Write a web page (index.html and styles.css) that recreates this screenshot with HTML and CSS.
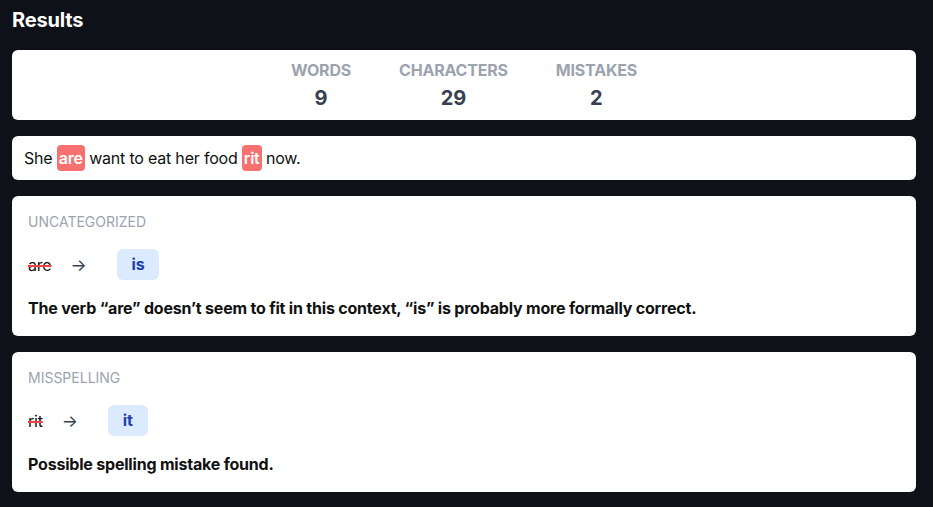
FILE: index.html
```html
<!DOCTYPE html>
<html>
<head>
<meta charset="utf-8">
<link rel="stylesheet" href="styles.css">
</head>
<body>
<div class="page">
  <h1 class="title">Results</h1>
  <div class="card stats">
    <div class="stat"><div class="stat-label">Words</div><div class="stat-value">9</div></div>
    <div class="stat"><div class="stat-label">Characters</div><div class="stat-value">29</div></div>
    <div class="stat"><div class="stat-label">Mistakes</div><div class="stat-value">2</div></div>
  </div>
  <div class="card sentence">She <span class="mark">are</span> want to eat her food <span class="mark">rit</span> now.</div>
  <div class="card issue">
    <div class="category">Uncategorized</div>
    <div class="fix"><span class="wrong">are</span><span class="arrow">→</span><span class="suggest">is</span></div>
    <div class="message">The verb “are” doesn’t seem to fit in this context, “is” is probably more formally correct.</div>
  </div>
  <div class="card issue">
    <div class="category">Misspelling</div>
    <div class="fix"><span class="wrong">rit</span><span class="arrow">→</span><span class="suggest">it</span></div>
    <div class="message">Possible spelling mistake found.</div>
  </div>
</div>
</body>
</html>
```
FILE: styles.css
```css
* { box-sizing: border-box; }
html, body { margin: 0; padding: 0; background: #0e1117; }
body { font-family: Inter, "Noto Sans", sans-serif; color: #111; }
.page { padding: 6px 17px 16px 12px; display: flex; flex-direction: column; gap: 16px; }
.title { margin: 0; color: #fff; font-size: 20px; font-weight: 700; line-height: 28px; letter-spacing: -0.2px; }
.card { background: #fff; border-radius: 6px; }
.stats { display: flex; justify-content: center; gap: 48px; padding: 8px 0; }
.stat { display: flex; flex-direction: column; align-items: center; }
.stat-label { color: #9ca3af; font-size: 16px; font-weight: 700; text-transform: uppercase; line-height: 24px; letter-spacing: -0.2px; }
.stat-value { color: #374151; font-size: 20px; font-weight: 700; line-height: 28px; margin-top: 2px; }
.sentence { padding: 10px 12px; font-size: 16px; line-height: 24px; letter-spacing: -0.2px; }
.mark { background: #f87171; color: #fff; font-weight: 600; border-radius: 4px; padding: 3px 2px; }
.issue { padding: 16px; }
.category { color: #9ca3af; font-size: 14px; line-height: 20px; text-transform: uppercase; }
.fix { display: flex; align-items: center; margin-top: 17px; font-size: 16px; letter-spacing: -0.2px; }
.wrong { text-decoration-line: line-through; text-decoration-color: #ef4444; text-decoration-thickness: 1.5px; color: #111; }
.arrow { margin-left: 19px; color: #374151; font-size: 17px; }
.suggest { background: #dbeafe; color: #1e40af; font-weight: 700; font-size: 16px; border-radius: 6px; padding: 0 15px; line-height: 31px; margin-left: 30px; }
.message { margin-top: 16px; font-size: 16px; font-weight: 700; line-height: 24px; letter-spacing: -0.2px; }
```
